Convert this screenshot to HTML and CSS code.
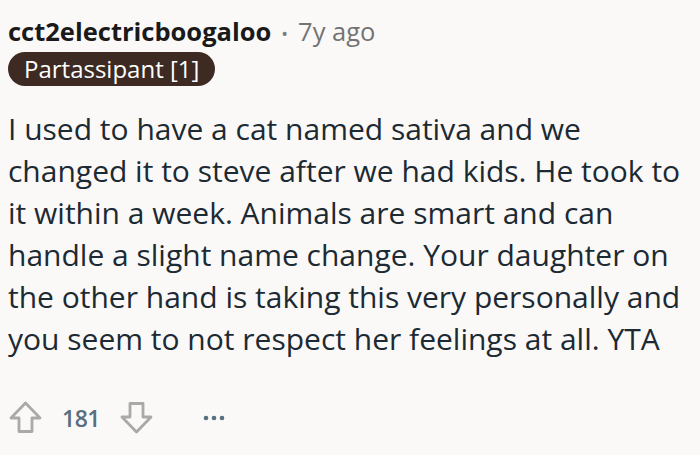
FILE: index.html
```html
<!DOCTYPE html>
<html lang="en">
<head>
    <meta charset="UTF-8">
    <meta name="viewport" content="width=device-width, initial-scale=1.0">
    <title>Comment</title>
    <link rel="stylesheet" href="styles.css">
</head>
<body>
    <div class="comment">
        <div class="meta">
            <span class="author">cct2electricboogaloo</span>
            <span class="dot">•</span>
            <span class="time">7y ago</span>
        </div>
        <div class="flair">Partassipant [1]</div>
        <p class="text">I used to have a cat named sativa and we changed it to steve after we had kids. He took to it within a week. Animals are smart and can handle a slight name change. Your daughter on the other hand is taking this very personally and you seem to not respect her feelings at all. YTA</p>
        <div class="actions">
            <svg class="vote up" width="33" height="33" viewBox="0 0 33 33">
                <path d="M16.5 2 L31 17 H23 V30.5 H10 V17 H2 Z" fill="none" stroke="#a9a9a9" stroke-width="2.8" stroke-linejoin="round"/>
            </svg>
            <span class="score">181</span>
            <svg class="vote down" width="33" height="33" viewBox="0 0 33 33">
                <path d="M16.5 31 L31 16 H23 V2.5 H10 V16 H2 Z" fill="none" stroke="#a9a9a9" stroke-width="2.8" stroke-linejoin="round"/>
            </svg>
            <svg class="more" width="22" height="6" viewBox="0 0 22 6">
                <circle cx="3" cy="3" r="2.3" fill="#576f7f"/>
                <circle cx="11" cy="3" r="2.3" fill="#576f7f"/>
                <circle cx="19" cy="3" r="2.3" fill="#576f7f"/>
            </svg>
        </div>
    </div>
</body>
</html>
```

FILE: styles.css
```css
body {
    margin: 0;
    background-color: #fbf9f8;
    font-family: "Open Sans", "Noto Sans", sans-serif;
}

.comment {
    padding: 12px 8px 0 8px;
}

.meta {
    display: flex;
    align-items: baseline;
    gap: 10px;
    font-size: 25.5px;
    line-height: 38px;
}

.author {
    font-weight: bold;
    color: #1a1a1b;
}

.dot {
    color: #7c7c7c;
    font-size: 18px;
}

.time {
    color: #737373;
}

.flair {
    display: inline-block;
    margin-top: -1px;
    background-color: #3d2a22;
    color: #fff;
    font-size: 24px;
    padding: 0 16px;
    border-radius: 18px;
    line-height: 34px;
}

.text {
    margin: 22px 0 0 0;
    font-size: 30px;
    line-height: 42px;
    color: #1c2a33;
}

.actions {
    display: flex;
    align-items: center;
    margin-top: 41px;
}

.vote.up {
    margin-left: 1px;
}

.score {
    font-size: 23px;
    font-weight: 600;
    letter-spacing: -0.5px;
    color: #576f7f;
    margin: 0 20px 0 20px;
}

.more {
    margin-left: 50px;
}
```
